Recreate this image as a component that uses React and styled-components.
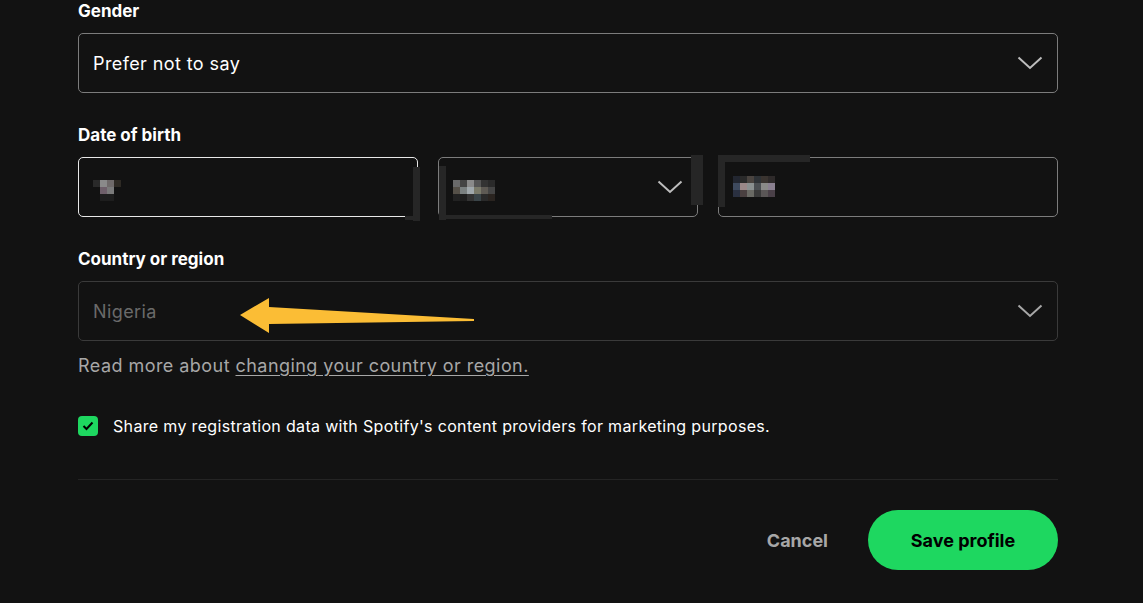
import React from 'react';
import styled, { createGlobalStyle } from 'styled-components';

const GlobalStyle = createGlobalStyle`
  html, body {
    margin: 0;
    padding: 0;
    background: #121212;
  }
  body {
    font-family: Inter, "Noto Sans", sans-serif;
    color: #fff;
  }
`;

const Page = styled.div`
  width: 1143px;
  height: 603px;
  overflow: hidden;
  background: #121212;
  padding-left: 78px;
  box-sizing: border-box;
`;

const Form = styled.form`
  width: 980px;
  display: flex;
  flex-direction: column;
  position: relative;
`;

const Group = styled.div`
  display: flex;
  flex-direction: column;
  gap: 11px;
  margin-top: ${p => p.$top || 0}px;
`;

const Label = styled.label`
  font-size: 17px;
  font-weight: 700;
  line-height: 22px;
  color: #fff;
`;

const Row = styled.div`
  display: grid;
  grid-template-columns: 340px 260px 340px;
  gap: 20px;
`;

const Field = styled.div`
  position: relative;
  height: 60px;
  box-sizing: border-box;
  border: 1px solid ${p => p.$border || '#7c7c7c'};
  border-radius: 5px;
  display: flex;
  align-items: center;
  justify-content: space-between;
  padding: 0 14px 0 14px;
  font-size: 18px;
  letter-spacing: 0.4px;
  color: ${p => p.$color || '#fff'};
`;

const Chevron = styled.svg`
  width: 26px;
  height: 14px;
  flex: none;
`;

const Smudge = styled.span`
  position: absolute;
  background: #262626;
`;

const Mosaic = styled.svg`
  display: block;
  margin-top: ${p => p.$dy || 0}px;
`;

const Help = styled.p`
  margin: 13px 0 0;
  font-size: 18px;
  line-height: 24px;
  letter-spacing: 0.45px;
  color: #a7a7a7;
  a {
    color: #a7a7a7;
    text-decoration: underline;
    text-underline-offset: 3px;
  }
`;

const CheckRow = styled.div`
  display: flex;
  align-items: center;
  gap: 15px;
  margin-top: 38px;
  font-size: 16px;
  letter-spacing: 0.33px;
  color: #fff;
`;

const Box = styled.span`
  width: 20px;
  height: 20px;
  border-radius: 4px;
  background: #1ed760;
  display: flex;
  align-items: center;
  justify-content: center;
`;

const Divider = styled.hr`
  border: none;
  border-top: 1px solid #242424;
  margin: 43px 0 0;
`;

const Actions = styled.div`
  display: flex;
  justify-content: flex-end;
  align-items: center;
  gap: 40px;
  margin-top: 30px;
`;

const Cancel = styled.button`
  background: none;
  border: none;
  font-family: inherit;
  font-size: 18px;
  font-weight: 700;
  color: #a7a7a7;
  padding: 0;
`;

const Save = styled.button`
  width: 190px;
  height: 60px;
  border: none;
  border-radius: 30px;
  background: #1ed760;
  color: #000;
  font-family: inherit;
  font-size: 18px;
  font-weight: 700;
`;

const Arrow = styled.svg`
  position: absolute;
  left: 158px;
  top: 294px;
`;

const Down = ({ color = '#bdbdbd' }) => (
  <Chevron viewBox="0 0 26 14">
    <path d="M1.5 1.5 L13 12 L24.5 1.5" fill="none" stroke={color} strokeWidth="2" />
  </Chevron>
);

const Pixels = ({ colors, cols, dy }) => {
  const s = 7;
  return (
    <Mosaic $dy={dy} width={cols * s} height={Math.ceil(colors.length / cols) * s}>
      {colors.map((c, i) =>
        c ? <rect key={i} x={(i % cols) * s} y={Math.floor(i / cols) * s} width={s} height={s} fill={c} /> : null
      )}
    </Mosaic>
  );
};

export default function App() {
  return (
    <Page>
      <GlobalStyle />
      <Form>
        <Group>
          <Label>Gender</Label>
          <Field>
            <span>Prefer not to say</span>
            <Down />
          </Field>
        </Group>

        <Group $top={31}>
          <Label>Date of birth</Label>
          <Row>
            <Field $border="#e8e8e8">
              <Pixels dy={6} cols={4} colors={['#2a2a2a', '#8a8a8a', '#6f6a6a', '#2e2a24', null, '#6e5f6a', '#7a7a7a', null, null, '#1e1e1e', '#1e1e1e', null]} />
              <Smudge style={{ right: -3, top: 9, width: 7, height: 54 }} />
              <Smudge style={{ right: -3, bottom: -4, width: 15, height: 4 }} />
            </Field>
            <Field>
              <Pixels dy={6} cols={6} colors={['#6a6a6a', '#444', '#8a8a8a', '#555', '#333', '#2a2a2a', '#555048', '#7a8080', '#a0a8ac', '#7a7a6a', '#5e5a54', '#444', '#222', '#1e1e1e', '#333', '#3a4448', '#2a2a2a', '#2a2420']} />
              <Down />
              <Smudge style={{ left: 0, top: 8, width: 7, height: 54 }} />
              <Smudge style={{ left: 7, bottom: -3, width: 106, height: 4 }} />
              <Smudge style={{ right: -6, top: -3, width: 12, height: 50 }} />
            </Field>
            <Field>
              <Pixels dy={-2} cols={6} colors={['#222630', '#2a2a2a', '#4a4440', '#2e3236', '#3a3430', '#2e2a2a', '#3e4a5e', '#9a8888', '#8a9090', '#4a4e52', '#8a8a88', '#8a8090', '#2a3040', '#4a4040', '#6a6a64', '#3a3a3a', '#5a5656', '#4a4048']} />
              <Smudge style={{ left: -1, top: -3, width: 92, height: 7 }} />
              <Smudge style={{ left: -1, top: -3, width: 7, height: 52 }} />
            </Field>
          </Row>
        </Group>

        <Group $top={31}>
          <Label>Country or region</Label>
          <Field $border="#3a3a3a" $color="#6a6a6a">
            <span>Nigeria</span>
            <Down color="#a7a7a7" />
          </Field>
        </Group>

        <Arrow width="244" height="44" viewBox="0 0 244 44">
          <path d="M4 21 L33 4 L33 13 L238 25 L238 27 L33 30 L33 39 Z" fill="#fbbd35" />
        </Arrow>

        <Help>
          Read more about <a href="#">changing your country or region.</a>
        </Help>

        <CheckRow>
          <Box>
            <svg width="12" height="10" viewBox="0 0 12 10">
              <path d="M1.5 5 L4.5 8 L10.5 1.5" fill="none" stroke="#000" strokeWidth="2" />
            </svg>
          </Box>
          <span>Share my registration data with Spotify's content providers for marketing purposes.</span>
        </CheckRow>

        <Divider />

        <Actions>
          <Cancel type="button">Cancel</Cancel>
          <Save type="button">Save profile</Save>
        </Actions>
      </Form>
    </Page>
  );
}
